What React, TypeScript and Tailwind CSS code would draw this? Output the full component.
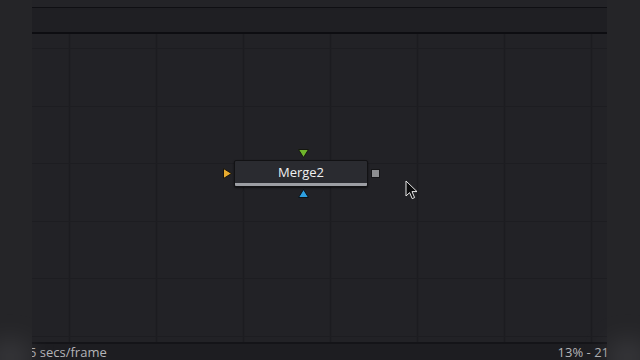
import React from 'react';

const VERTICAL = [37, 124, 211, 298, 385, 472, 559];
const HORIZONTAL = [14, 72, 129, 187, 244, 302];

const GridLines: React.FC = () => (
  <svg className="absolute inset-0 h-full w-full" width="575" height="309">
    {VERTICAL.map((x) => (
      <line key={`v${x}`} x1={x + 0.5} y1={0} x2={x + 0.5} y2={309} stroke="#1c1c20" strokeWidth={1.5} />
    ))}
    {HORIZONTAL.map((y) => (
      <line key={`h${y}`} x1={0} y1={y + 0.5} x2={575} y2={y + 0.5} stroke="#1d1d21" strokeWidth={1.2} />
    ))}
  </svg>
);

const MergeNode: React.FC = () => (
  <div className="absolute left-[191px] top-[115px] h-[50px] w-[160px]">
    {/* top input */}
    <svg className="absolute left-[75px] top-[0px]" width="11" height="9" viewBox="0 0 11 9">
      <path d="M0.5 0.5 H10.5 L5.5 8.5 Z" fill="#6fb52c" stroke="#14160f" strokeWidth="1" />
    </svg>
    {/* left input */}
    <svg className="absolute left-[0px] top-[19px]" width="9" height="11" viewBox="0 0 9 11">
      <path d="M0.5 0.5 V10.5 L8.5 5.5 Z" fill="#e8ab2f" stroke="#17140c" strokeWidth="1" />
    </svg>
    {/* node body */}
    <div className="absolute left-[11px] top-[11px] flex h-[27px] w-[134px] flex-col overflow-hidden rounded-[2px] border border-[#121214] bg-[#2a2b30] shadow-[0_1px_2px_rgba(0,0,0,0.6)]">
      <div className="flex flex-1 items-center justify-center text-[13px] leading-none font-medium text-[#f0f0f0] [font-family:'Open_Sans',sans-serif]">
        Merge2
      </div>
      <div className="h-[3px] bg-[#9c9ea3]" />
    </div>
    {/* output */}
    <div className="absolute left-[148px] top-[20px] h-[9px] w-[9px] border border-[#151517] bg-[#8d8e91]" />
    {/* bottom mask input */}
    <svg className="absolute left-[75px] top-[40px]" width="11" height="9" viewBox="0 0 11 9">
      <path d="M0.5 8.5 H10.5 L5.5 0.5 Z" fill="#2d9fe0" stroke="#0c1318" strokeWidth="1" />
    </svg>
  </div>
);

const Cursor: React.FC = () => (
  <svg className="absolute left-[373px] top-[146px]" width="14" height="20" viewBox="0 0 14 20">
    <path
      d="M1 1 V16 L4.6 12.6 L7.2 18.6 L9.6 17.6 L7 11.6 H12 Z"
      fill="#0b0b0c"
      stroke="#e8e8e8"
      strokeWidth="1"
      strokeLinejoin="round"
    />
  </svg>
);

const App: React.FC = () => {
  return (
    <div className="flex h-[360px] w-[640px] overflow-hidden bg-[#252528] [font-family:'Open_Sans',sans-serif]">
      <div className="relative w-[32px] shrink-0">
        <div className="absolute bottom-[-14px] left-[-10px] h-[34px] w-[40px] rounded-full bg-[#4a4a4e] opacity-50 blur-md" />
      </div>
      <div className="flex w-[575px] shrink-0 flex-col">
        <div className="h-[7px] bg-[#232327]" />
        <div className="h-px bg-[#0f0f13]" />
        <div className="h-[24px] bg-[#1f1f23]" />
        <div className="h-[2px] bg-[#0d0d11]" />
        <div className="relative flex-1 overflow-hidden bg-[#222226]">
          <GridLines />
          <MergeNode />
          <Cursor />
        </div>
        <div className="h-[2px] bg-[#141418]" />
        <div className="flex h-[16px] items-end justify-between overflow-hidden bg-[#1d1d21] text-[13px] leading-[15px] text-[#b4b4b8]">
          <span className="-ml-[3px] whitespace-nowrap">5 secs/frame</span>
          <span className="-mr-[2px] whitespace-nowrap">13% - 21</span>
        </div>
      </div>
      <div className="relative flex-1">
        <div className="absolute bottom-[-14px] right-[-8px] h-[34px] w-[40px] rounded-full bg-[#4a4a4e] opacity-50 blur-md" />
      </div>
    </div>
  );
};

export default App;
